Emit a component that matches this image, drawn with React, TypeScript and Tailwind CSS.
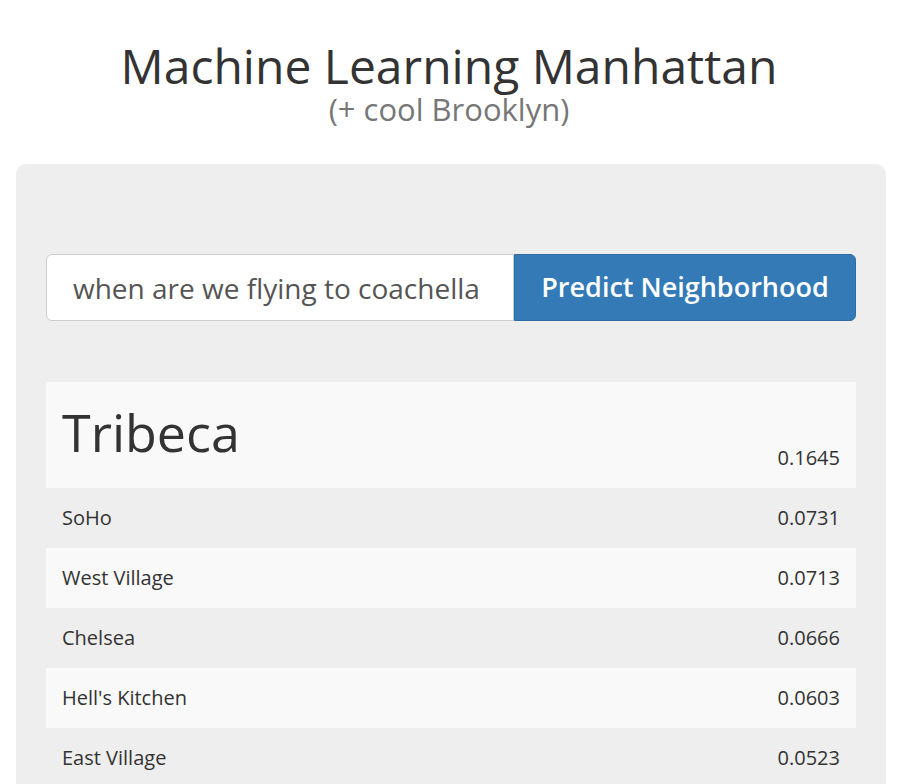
import React from 'react';

const results = [
  { name: 'SoHo', score: '0.0731' },
  { name: 'West Village', score: '0.0713' },
  { name: 'Chelsea', score: '0.0666' },
  { name: "Hell's Kitchen", score: '0.0603' },
  { name: 'East Village', score: '0.0523' },
  { name: 'Lower East Side', score: '0.0498' },
];

const App: React.FC = () => {
  return (
    <div className="h-screen overflow-hidden bg-white text-[#333] font-['Open_Sans',sans-serif]">
      <div className="pt-[38px] text-center">
        <h1 className="text-[48px] leading-[56px] text-[#333]">Machine Learning Manhattan</h1>
        <p className="text-[31px] leading-[30px] text-[#777]">(+ cool Brooklyn)</p>
      </div>

      <div className="ml-[16px] mt-[40px] w-[870px] rounded-[10px] bg-[#eee] px-[30px] pt-[90px] pb-[60px]">
        <form className="flex h-[67px]" onSubmit={(e) => e.preventDefault()}>
          <input
            type="text"
            defaultValue="when are we flying to coachella"
            className="w-[468px] rounded-l-[6px] border border-[#ccc] bg-white px-[26px] text-[28px] text-[#555] outline-none"
          />
          <button
            type="submit"
            className="flex-1 rounded-r-[6px] border border-[#2e6da4] bg-[#337ab7] text-[27px] font-semibold text-white"
          >
            Predict Neighborhood
          </button>
        </form>

        <div className="mt-[61px]">
          <div className="flex h-[106px] items-end justify-between bg-[#f9f9f9] px-[16px] pb-[18px]">
            <span className="mb-[8px] text-[52px] leading-[60px]">Tribeca</span>
            <span className="text-[20px] leading-[24px]">0.1645</span>
          </div>
          {results.map((r, i) => (
            <div
              key={r.name}
              className={
                'flex h-[60px] items-center justify-between px-[16px] text-[20px] ' +
                (i % 2 === 1 ? 'bg-[#f9f9f9]' : '')
              }
            >
              <span>{r.name}</span>
              <span>{r.score}</span>
            </div>
          ))}
        </div>
      </div>
    </div>
  );
};

export default App;
